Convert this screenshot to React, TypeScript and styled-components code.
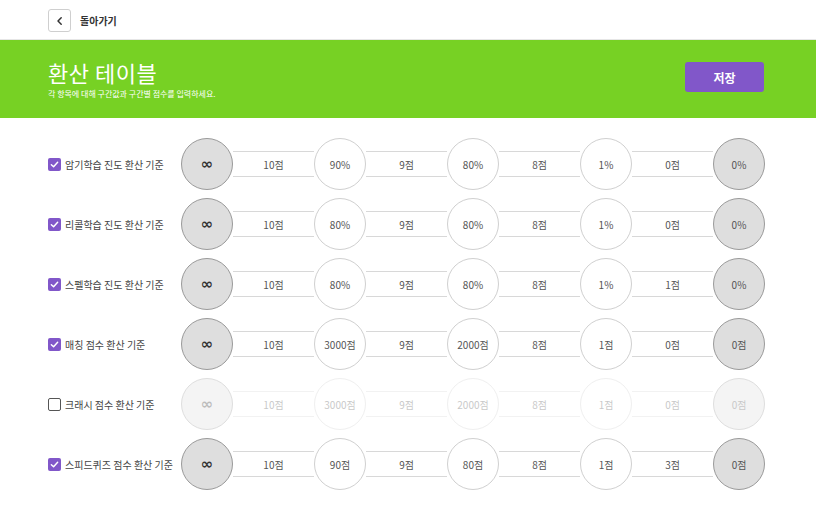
import React from 'react';
import styled, { createGlobalStyle } from 'styled-components';

const GlobalStyle = createGlobalStyle`
  body {
    margin: 0;
    background: #fff;
    font-family: "Noto Sans CJK KR", "Noto Sans", sans-serif;
    color: #333;
  }
`;

const TopBar = styled.div`
  height: 40px;
  display: flex;
  align-items: center;
  padding: 0 48px;
  gap: 9px;
  box-sizing: border-box;
  border-bottom: 1px solid #e6e6e6;
`;

const BackButton = styled.button`
  width: 23px;
  height: 23px;
  padding: 0;
  border: 1px solid #cfcfcf;
  border-radius: 3px;
  background: #fff;
  display: flex;
  align-items: center;
  justify-content: center;
  margin-top: 2px;
`;

const BackLabel = styled.span`
  font-size: 10px;
  font-weight: 700;
  color: #333;
  margin-top: 1px;
`;

const Banner = styled.div`
  background: #77d124;
  height: 78px;
  padding: 0 52px 0 48px;
  display: flex;
  align-items: center;
  justify-content: space-between;
`;

const TitleBlock = styled.div`
  display: flex;
  flex-direction: column;
  color: #fff;
  margin-top: -3px;
`;

const Title = styled.h1`
  margin: 0;
  font-size: 22px;
  font-weight: 400;
  line-height: 32px;
  letter-spacing: 0.5px;
`;

const Subtitle = styled.p`
  margin: 0;
  font-size: 8px;
  line-height: 12px;
`;

const SaveButton = styled.button`
  width: 79px;
  height: 30px;
  border: none;
  border-radius: 3px;
  background: #8157c9;
  color: #fff;
  font-family: inherit;
  font-size: 12px;
  font-weight: 700;
  margin-top: -4px;
`;

const Table = styled.div`
  display: flex;
  flex-direction: column;
  gap: 8px;
  padding: 20px 48px;
`;

const Row = styled.div<{ $off?: boolean }>`
  display: flex;
  align-items: center;
  > .cells {
    opacity: ${(p) => (p.$off ? 0.32 : 1)};
  }
`;

const Label = styled.label`
  width: 133px;
  display: flex;
  align-items: center;
  gap: 4px;
  font-size: 10px;
  color: #444;
`;

const Check = styled.span<{ $on: boolean }>`
  width: 13px;
  height: 13px;
  box-sizing: border-box;
  border-radius: 2px;
  display: flex;
  align-items: center;
  justify-content: center;
  background: ${(p) => (p.$on ? '#8157c9' : '#fff')};
  border: ${(p) => (p.$on ? 'none' : '1px solid #555')};
`;

const Cells = styled.div`
  display: flex;
  align-items: center;
`;

const Circle = styled.div<{ $end?: boolean }>`
  width: 52px;
  height: 52px;
  box-sizing: border-box;
  border-radius: 50%;
  display: flex;
  align-items: center;
  justify-content: center;
  font-size: 10px;
  color: #555;
  background: ${(p) => (p.$end ? '#dedede' : '#fff')};
  border: 1px solid ${(p) => (p.$end ? '#9a9a9a' : '#d0d0d0')};
  flex-shrink: 0;
`;

const Infinity = styled.span`
  font-size: 15px;
  font-weight: 700;
  color: #333;
  font-family: "DejaVu Sans", sans-serif;
  margin-top: -1px;
`;

const Segment = styled.div`
  width: 81px;
  height: 26px;
  box-sizing: border-box;
  border-top: 1px solid #d8d8d8;
  border-bottom: 1px solid #d8d8d8;
  display: flex;
  align-items: center;
  justify-content: center;
  font-size: 10px;
  color: #555;
`;

type RowData = {
  label: string;
  on: boolean;
  bounds: string[];
  scores: string[];
  last: string;
};

const rows: RowData[] = [
  { label: '암기학습 진도 환산 기준', on: true, bounds: ['90%', '80%', '1%'], scores: ['10점', '9점', '8점', '0점'], last: '0%' },
  { label: '리콜학습 진도 환산 기준', on: true, bounds: ['80%', '80%', '1%'], scores: ['10점', '9점', '8점', '0점'], last: '0%' },
  { label: '스펠학습 진도 환산 기준', on: true, bounds: ['80%', '80%', '1%'], scores: ['10점', '9점', '8점', '1점'], last: '0%' },
  { label: '매칭 점수 환산 기준', on: true, bounds: ['3000점', '2000점', '1점'], scores: ['10점', '9점', '8점', '0점'], last: '0점' },
  { label: '크래시 점수 환산 기준', on: false, bounds: ['3000점', '2000점', '1점'], scores: ['10점', '9점', '8점', '0점'], last: '0점' },
  { label: '스피드퀴즈 점수 환산 기준', on: true, bounds: ['90점', '80점', '1점'], scores: ['10점', '9점', '8점', '3점'], last: '0점' },
];

const CheckMark = () => (
  <svg width="9" height="9" viewBox="0 0 10 10">
    <path d="M1.5 5.2 L4 7.5 L8.5 2.5" fill="none" stroke="#fff" strokeWidth="1.6" strokeLinecap="round" strokeLinejoin="round" />
  </svg>
);

const App: React.FC = () => {
  return (
    <>
      <GlobalStyle />
      <TopBar>
        <BackButton aria-label="back">
          <svg width="10" height="10" viewBox="0 0 10 10">
            <path d="M6.2 1.8 L3 5 L6.2 8.2" fill="none" stroke="#333" strokeWidth="1.5" strokeLinecap="round" strokeLinejoin="round" />
          </svg>
        </BackButton>
        <BackLabel>돌아가기</BackLabel>
      </TopBar>
      <Banner>
        <TitleBlock>
          <Title>환산 테이블</Title>
          <Subtitle>각 항목에 대해 구간값과 구간별 점수를 입력하세요.</Subtitle>
        </TitleBlock>
        <SaveButton>저장</SaveButton>
      </Banner>
      <Table>
        {rows.map((r) => (
          <Row key={r.label} $off={!r.on}>
            <Label>
              <Check $on={r.on}>{r.on && <CheckMark />}</Check>
              {r.label}
            </Label>
            <Cells className="cells">
              <Circle $end>
                <Infinity>∞</Infinity>
              </Circle>
              {r.scores.map((s, i) => (
                <React.Fragment key={i}>
                  <Segment>{s}</Segment>
                  {i < r.bounds.length ? <Circle>{r.bounds[i]}</Circle> : <Circle $end>{r.last}</Circle>}
                </React.Fragment>
              ))}
            </Cells>
          </Row>
        ))}
      </Table>
    </>
  );
};

export default App;
